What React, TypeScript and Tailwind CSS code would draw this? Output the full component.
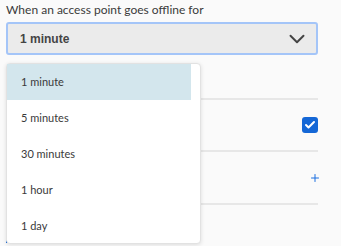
import React from "react";
import { ChevronDown, Check, Plus } from "lucide-react";

const options = ["1 minute", "5 minutes", "30 minutes", "1 hour", "1 day"];

export default function App() {
  return (
    <div
      className="relative w-[341px] h-[246px] overflow-hidden bg-[#fafafa] text-[#333]"
      style={{ fontFamily: "Lato, 'Liberation Sans', sans-serif" }}
    >
      <div className="pl-[6px] pr-[23px] pt-[2px]">
        <label className="block text-[12px] leading-[16px] text-[#3a3a3a]">
          When an access point goes offline for
        </label>

        <div className="mt-[4px] h-[33px] flex items-center justify-between rounded-[3px] border-2 border-[#a4c5f8] bg-[#ebebeb] pl-[12px] pr-[6px]">
          <span className="text-[12px] font-bold text-[#444]" style={{ fontFamily: "'Liberation Sans', Arial, sans-serif" }}>
            1 minute
          </span>
          <ChevronDown size={26} strokeWidth={1.8} className="text-[#444]" />
        </div>

        <div className="mt-[9px]">
          <div className="h-[36px] border-b-2 border-[#e7e7e7]" />
          <div className="h-[52px] flex items-center justify-end border-b-2 border-[#e7e7e7]">
            <span className="w-[16px] h-[16px] rounded-[3px] bg-[#1467d6] flex items-center justify-center">
              <Check size={12} strokeWidth={4} className="text-white" />
            </span>
          </div>
          <div className="h-[53px] flex items-center justify-end border-b-2 border-[#e7e7e7]">
            <Plus size={12} strokeWidth={2} className="text-[#1a6fe0] mr-[-3px]" />
          </div>
          <div className="h-[38px] flex items-end">
            <div className="w-[90px] h-[4px] bg-[#1467d6]" />
          </div>
        </div>
      </div>

      <div className="absolute left-[6px] top-[63px] w-[195px] h-[181px] rounded-[4px] border border-[#e2e2e2] bg-white shadow-[0_1px_4px_rgba(0,0,0,0.12)] pr-[9px]">
        {options.map((o, i) => (
          <div
            key={o}
            className={`h-[36px] flex items-center pl-[14px] text-[11px] text-[#3a3a3a] ${i === 0 ? "bg-[#d3e6ed]" : ""}`}
          >
            {o}
          </div>
        ))}
      </div>
    </div>
  );
}
